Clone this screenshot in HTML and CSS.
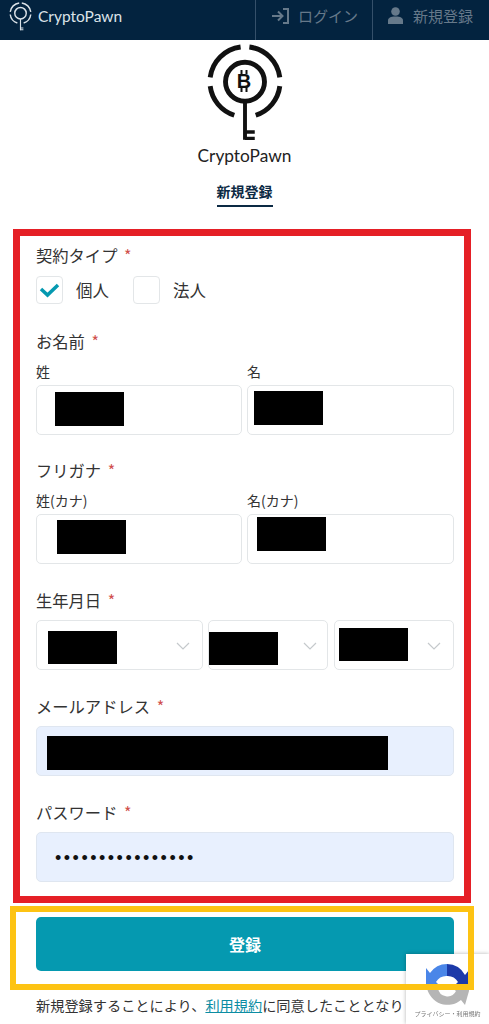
FILE: index.html
```html
<!DOCTYPE html>
<html lang="ja">

<head>
    <meta charset="UTF-8">
    <meta name="viewport" content="width=device-width, initial-scale=1.0">
    <title>新規登録 | CryptoPawn</title>
    <link rel="stylesheet" href="styles.css">
</head>

<body>

    <!-- shared key logo, used in the header and above the form -->
    <svg class="defs" width="0" height="0">
        <symbol id="key-logo" viewBox="0 0 80 100">
            <g fill="none" stroke="currentColor" stroke-width="5">
                <path d="M4.300 34A36 36 0 0 1 35.500 2.800" />
                <path d="M44.500 2.800A36 36 0 0 1 75.700 34" />
                <path d="M4.300 43A36 36 0 0 0 29 72.800" />
                <path d="M51 72.800A36 36 0 0 0 75.700 43" />
                <circle cx="40" cy="38.500" r="20" />
                <path d="M40 58.500V98" stroke-width="4" />
                <path d="M40 90H50M40 96.500H50" stroke-width="3.500" />
            </g>
        </symbol>
    </svg>

    <header class="topbar">
        <a class="brand" href="#">
            <svg class="brand-icon">
                <use href="#key-logo" />
            </svg>
            <span>CryptoPawn</span>
        </a>
        <a class="nav-item nav-login" href="#">
            <svg width="18" height="18" viewBox="0 0 18 18" fill="none" stroke="currentColor" stroke-width="2">
                <path d="M1 9H11M7 4.500L11.500 9L7 13.500" />
                <path d="M12 2H17V16H12" />
            </svg>
            ログイン
        </a>
        <a class="nav-item nav-signup" href="#">
            <svg width="15" height="17" viewBox="0 0 15 17" fill="currentColor">
                <circle cx="7.500" cy="4.500" r="4.300" />
                <path d="M0 17V13.500C0 11 2.500 9.500 7.500 9.500S15 11 15 13.500V17Z" />
            </svg>
            新規登録
        </a>
    </header>

    <div class="logo">
        <svg class="logo-icon">
            <use href="#key-logo" />
        </svg>
        <svg class="logo-b" width="24" height="28" viewBox="0 0 24 28">
            <text x="12" y="21" text-anchor="middle">B</text>
            <path d="M9.500 3V7M14.500 3V7M9.500 20V25M14.500 20V25" stroke="#111" stroke-width="2" />
        </svg>
        <p class="logo-name">CryptoPawn</p>
    </div>

    <h1 class="page-title"><span>新規登録</span></h1>

    <form class="form-box">
        <div class="label label-first">契約タイプ <span class="required">*</span></div>
        <div class="check-row">
            <span class="check">
                <svg width="21" height="16" viewBox="0 0 21 16" fill="none" stroke="#0599b0" stroke-width="3.500">
                    <path d="M2 7L8.500 13L19 3" />
                </svg>
            </span>
            <span class="check-text">個人</span>
            <span class="check"></span>
            <span class="check-text">法人</span>
        </div>

        <div class="label">お名前 <span class="required">*</span></div>
        <div class="two-col">
            <div>
                <div class="sub-label">姓</div>
                <div class="field"><span class="redact r-sei"></span></div>
            </div>
            <div>
                <div class="sub-label">名</div>
                <div class="field"><span class="redact r-mei"></span></div>
            </div>
        </div>

        <div class="label label-kana">フリガナ <span class="required">*</span></div>
        <div class="two-col">
            <div>
                <div class="sub-label">姓(カナ)</div>
                <div class="field"><span class="redact r-sei-kana"></span></div>
            </div>
            <div>
                <div class="sub-label">名(カナ)</div>
                <div class="field"><span class="redact r-mei-kana"></span></div>
            </div>
        </div>

        <div class="label">生年月日 <span class="required">*</span></div>
        <div class="date-row">
            <div class="field select select-year">
                <span class="redact r-year"></span>
                <svg class="chevron" width="14" height="8" viewBox="0 0 14 8"><path d="M1 1L7 7L13 1" /></svg>
            </div>
            <div class="field select select-month">
                <span class="redact r-month"></span>
                <svg class="chevron" width="14" height="8" viewBox="0 0 14 8"><path d="M1 1L7 7L13 1" /></svg>
            </div>
            <div class="field select select-day">
                <span class="redact r-day"></span>
                <svg class="chevron" width="14" height="8" viewBox="0 0 14 8"><path d="M1 1L7 7L13 1" /></svg>
            </div>
        </div>

        <div class="label">メールアドレス <span class="required">*</span></div>
        <div class="field field-filled"><span class="redact r-mail"></span></div>

        <div class="label">パスワード <span class="required">*</span></div>
        <div class="field field-filled password">••••••••••••••••</div>
    </form>

    <div class="submit-box">
        <button class="btn" type="button">登録</button>
    </div>

    <p class="terms">新規登録することにより、<a href="#">利用規約</a>に同意したこととなり</p>

    <div class="recaptcha">
        <svg width="44" height="46" viewBox="0 0 44 46">
            <path fill="#b5b5b5" d="M2 26H13A9.500 9.500 0 0 0 31 29L27 26H44V29L40 43L36 38A21 21 0 0 1 2 26Z" />
            <path fill="#4a86e8" d="M22 2A21 21 0 0 0 5 11L1 6V24H15L11 20A12 12 0 0 1 22 14Z" />
            <path fill="#1c3aa9" d="M22 2A21 21 0 0 1 40 13L44 8V24H29L33 20A12 12 0 0 0 22 14Z" />
        </svg>
        <span>プライバシー・利用規約</span>
    </div>

</body>

</html>
```

FILE: styles.css
```css
* {
    box-sizing: border-box;
}

html,
body {
    height: 1024px;
    overflow: hidden;
}

body {
    margin: 0;
    background-color: #fff;
    color: #333;
    font-family: "Noto Sans CJK JP", "Noto Sans", sans-serif;
}

a {
    text-decoration: none;
}

.defs {
    position: absolute;
}

/* header */
.topbar {
    display: flex;
    height: 40px;
    background-color: #03233f;
    color: #5f7487;
}

.brand {
    display: flex;
    align-items: flex-start;
    width: 255px;
    padding: 2px 0 0 9px;
    color: #dbe2e8;
    font-family: Lato, sans-serif;
    font-size: 15.500px;
    line-height: 28px;
}

.brand-icon {
    width: 23px;
    height: 29px;
    margin-right: 6px;
    color: #dbe2e8;
}

.nav-item {
    display: flex;
    align-items: center;
    border-left: 1px solid #35506a;
    color: #66798a;
    font-size: 15px;
    padding-bottom: 9px;
}

.nav-login {
    width: 117px;
    padding-left: 15px;
    gap: 9px;
}

.nav-signup {
    flex: 1;
    padding-left: 15px;
    gap: 10px;
}

/* logo block */
.logo {
    position: relative;
    height: 141px;
    padding-top: 4px;
    text-align: center;
}

.logo-icon {
    display: block;
    width: 78px;
    height: 98px;
    margin: 0 auto;
    color: #111;
}

.logo-b {
    position: absolute;
    left: 232px;
    top: 27px;
}

.logo-b text {
    font-family: "Liberation Sans", sans-serif;
    font-size: 20px;
    font-weight: bold;
    fill: #111;
}

.logo-name {
    margin: 2px 0 0;
    color: #222;
    font-family: Lato, sans-serif;
    font-size: 17.300px;
    line-height: 24px;
}

.page-title {
    margin: 0;
    height: 48px;
    color: #0c2a44;
    font-size: 14px;
    font-weight: bold;
    line-height: 20px;
    text-align: center;
}

.page-title span {
    display: inline-block;
    padding-bottom: 4px;
    border-bottom: 2px solid #0c2a44;
}

/* red frame around the form */
.form-box {
    width: 458px;
    margin-left: 13px;
    padding: 0 10px 14px 16px;
    border: 7px solid #e51f26;
}

.label {
    height: 24px;
    margin-top: 24px;
    font-size: 16.300px;
    line-height: 24px;
}

.label-first {
    margin-top: 7px;
}

.label-kana {
    margin-top: 23px;
}

.required {
    margin-left: 3px;
    color: #d0504c;
    font-size: 16px;
}

.check-row {
    display: flex;
    align-items: center;
    margin-top: 9px;
    margin-bottom: 25px;
}

.check {
    display: flex;
    align-items: center;
    justify-content: center;
    width: 27px;
    height: 28px;
    border: 1px solid #e3e6e8;
    border-radius: 4px;
}

.check-text {
    width: 70px;
    padding-left: 13px;
    font-size: 16.500px;
}

.check-row + .label {
    margin-top: 0;
}

.two-col {
    display: grid;
    grid-template-columns: 206px 207px;
    gap: 5px;
}

.sub-label {
    height: 20px;
    margin-top: 8px;
    margin-bottom: 4px;
    font-size: 14px;
    line-height: 20px;
}

.field {
    height: 50px;
    border: 1px solid #e3e6e8;
    border-radius: 5px;
    background-color: #fff;
}

.field-filled {
    margin-top: 8px;
    border-color: #dfe6f0;
    background-color: #e8f0fe;
}

.password {
    padding-left: 18px;
    color: #111;
    font-family: "Liberation Sans", sans-serif;
    font-size: 18px;
    letter-spacing: 2.500px;
    line-height: 50px;
}

.date-row {
    display: flex;
    margin-top: 8px;
}

.select {
    display: flex;
    align-items: flex-start;
    justify-content: space-between;
}

.select-year {
    width: 167px;
    margin-right: 5px;
}

.select-month {
    width: 120px;
    margin-right: 6px;
}

.select-day {
    width: 120px;
}

.chevron {
    flex: none;
    margin-top: 21px;
    fill: none;
    stroke: #c5c9cc;
    stroke-width: 1.200;
}

.select-year .chevron {
    margin-right: 12px;
}

.select-month .chevron {
    margin-right: 10px;
}

.select-day .chevron {
    margin-right: 12px;
}

/* blacked out values */
.redact {
    display: block;
    width: 69px;
    height: 34px;
    background-color: #000;
}

.r-sei {
    margin: 6px 0 0 18px;
}

.r-mei {
    margin: 5px 0 0 6px;
}

.r-sei-kana {
    margin: 5px 0 0 20px;
}

.r-mei-kana {
    margin: 2px 0 0 9px;
}

.r-year {
    margin: 10px 0 0 11px;
    height: 33px;
}

.r-month {
    margin: 11px 0 0 0;
    height: 33px;
}

.r-day {
    margin: 7px 0 0 4px;
    height: 33px;
}

.r-mail {
    width: 341px;
    margin: 9px 0 0 10px;
}

/* yellow frame around the button */
.submit-box {
    position: relative;
    width: 464px;
    height: 84px;
    margin: 3px 0 0 10px;
    padding: 11px 0 0 26px;
}

.submit-box::after {
    content: "";
    position: absolute;
    inset: 0;
    z-index: 2;
    border: 6px solid #fdc313;
    pointer-events: none;
}

.btn {
    display: block;
    width: 418px;
    height: 54px;
    border: none;
    border-radius: 5px;
    background-color: #0599b0;
    color: #fff;
    font-family: inherit;
    font-size: 16px;
    font-weight: bold;
}

.terms {
    margin: 4px 0 0 36px;
    font-size: 14.200px;
    line-height: 22px;
    white-space: nowrap;
}

.terms a {
    color: #0c8da3;
    text-decoration: underline;
}

/* recaptcha badge */
.recaptcha {
    position: fixed;
    right: 0;
    bottom: 0;
    z-index: 1;
    width: 83px;
    height: 70px;
    padding: 8px 0 0 19px;
    background-color: #fff;
    box-shadow: 0 0 4px rgba(0, 0, 0, 0.3);
}

.recaptcha svg {
    display: block;
}

.recaptcha span {
    position: absolute;
    left: 0;
    right: 0;
    bottom: 6px;
    color: #777;
    font-size: 6px;
    line-height: 9px;
    text-align: center;
    white-space: nowrap;
}
```
